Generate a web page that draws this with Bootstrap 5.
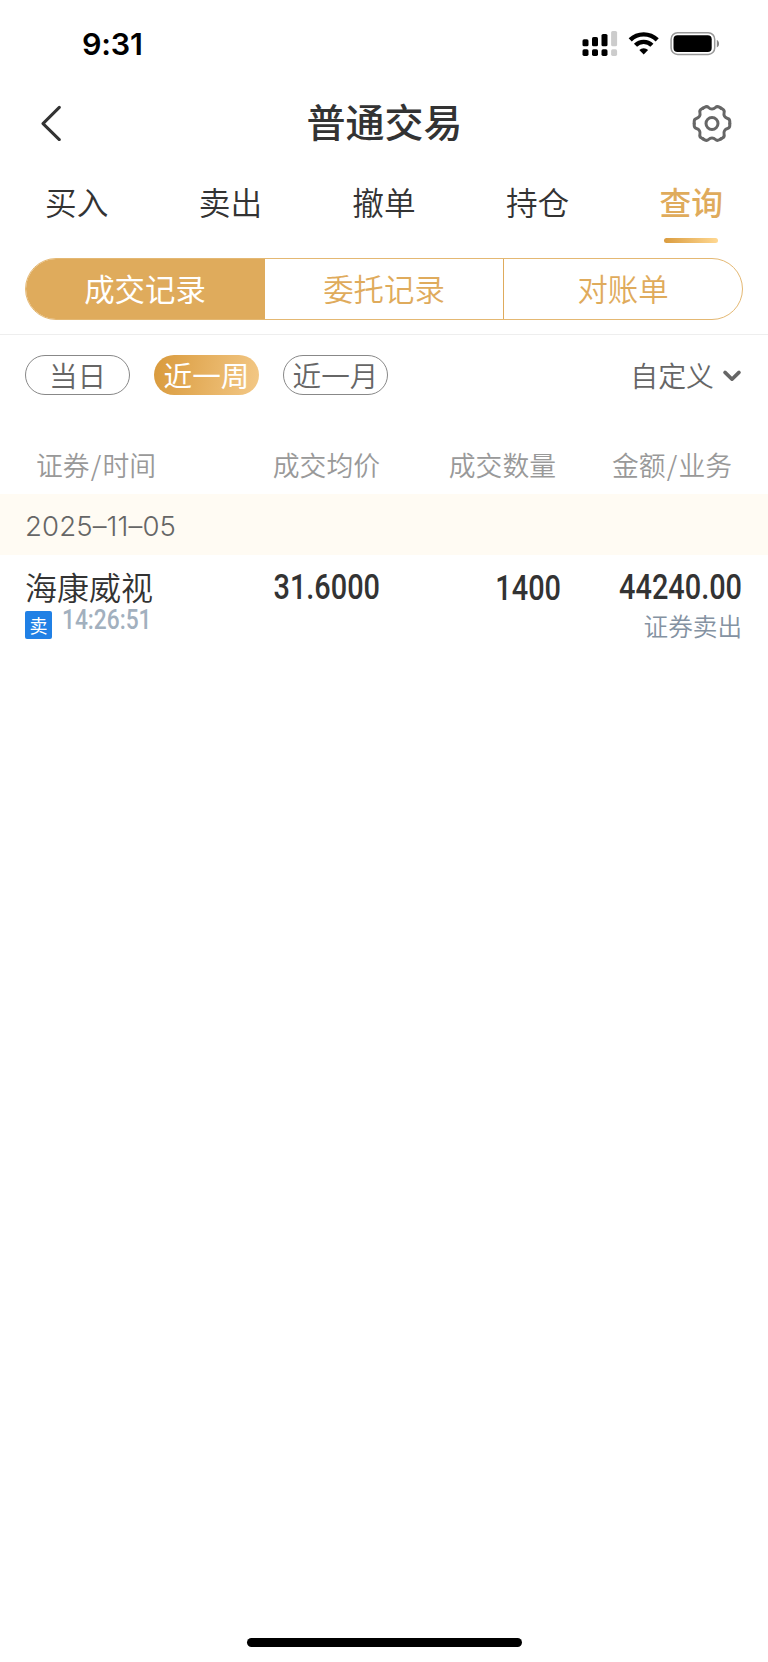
<!DOCTYPE html>
<html lang="zh-CN">
<head>
<meta charset="utf-8">
<meta name="viewport" content="width=device-width, initial-scale=1">
<title>普通交易</title>
<link rel="stylesheet" href="https://cdn.jsdelivr.net/npm/bootstrap@5.3.0/dist/css/bootstrap.min.css">
<style>
  :root { --gold: #dfab5c; --ink: #333; --soft: #666; }
  body { font-family: "Noto Sans CJK SC", sans-serif; font-weight: 350; color: var(--ink); line-height: 1; background: #fff; }
  .screen { height: 1662px; overflow: hidden; }
  .status-bar { height: 87px; padding: 1px 48px 0 82px; }
  .clock { font: 600 30.5px/1 Inter, sans-serif; color: #000; letter-spacing: -.2px; }
  .title-bar { height: 72px; padding: 0 35px 0 40px; }
  .title-bar h1 { font-size: 39px; font-weight: 500; line-height: 1; padding: 0 0 6px 16px; }
  .tabs { height: 99px; }
  .tabs a { flex: 1 1 0; font-size: 31.7px; color: var(--ink); padding-top: 27px; }
  .tabs a.active { color: var(--gold); font-weight: 500; }
  .tabs a.active::after { content: ""; width: 54px; height: 5px; margin-top: 20px; border-radius: 2.5px; background: linear-gradient(90deg, #da9c3f, #ffd892); }
  .segments { height: 62px; margin: 0 25px; border: 1px solid #e4b873; border-radius: 31px; overflow: hidden; }
  .segments a { flex: 1 1 0; font-size: 30.4px; color: var(--gold); padding-bottom: 2px; }
  .segments a + a { border-left: 1px solid var(--gold); }
  .segments a.active { background: var(--gold); color: #fff; font-weight: 400; }
  .rule { height: 1px; margin-top: 14px; background: #eee; }
  .filters { height: 79px; padding: 0 26px 0 25px; }
  .pill { width: 105px; height: 40px; font-size: 28.6px; color: var(--soft); border: 1px solid #888; border-radius: 20px; white-space: nowrap; padding-top: 1px; }
  .pill.active { color: #fff; border: 0; font-weight: 400; background: linear-gradient(100deg, #d99a3c, #f3c886); }
  .custom { font-size: 27.9px; color: var(--soft); padding-top: 3px; }
  .head-row { height: 80px; font-size: 26.8px; color: #999; padding-top: 38px; }
  .slash { margin: 0 1.2px; }
  .cols { display: grid; grid-template-columns: 218px 137px 181px 1fr; padding-left: 25px; padding-right: 26px; }
  .date-band { height: 61px; background: #fffbf3; color: var(--soft); padding: 4px 0 0 25px; font: 350 27.6px/1 Inter, sans-serif; letter-spacing: .1px; }
  .trade { padding-top: 15px; }
  .stock { font-size: 32px; }
  .num { font-family: Roboto, sans-serif; font-weight: 500; font-size: 34.8px; line-height: 1; transform: scaleX(.83); transform-origin: right; }
  .stamp { font-family: Roboto, sans-serif; font-size: 27.4px; font-weight: 500; line-height: 1; height: 27px; margin: -4px 0 0 10px; color: #a2b0be; transform: scaleX(.83); transform-origin: left; }
  .side { width: 27px; height: 28px; border-radius: 2px; background: #2080e5; color: #fff; font-size: 18px; font-weight: 400; }
  .badge-line { margin-top: 9px; }
  .kind { font-size: 24.6px; color: #8492a2; margin-top: 8px; }
  .home-bar { width: 275px; height: 9px; border-radius: 5px; background: #000; margin-bottom: 15px; }
  svg { display: block; }
</style>
</head>
<body>
<main class="screen d-flex flex-column">
  <div class="status-bar d-flex align-items-center justify-content-between">
    <span class="clock">9:31</span>
    <svg width="138" height="28" viewBox="581.5 30 138 28">
      <rect x="582" y="39.3" width="6" height="7" rx="1.6"/><rect x="591.5" y="37" width="6" height="9.3" rx="1.6"/><rect x="601" y="34" width="6" height="12.3" rx="1.6"/>
      <rect x="582" y="49.3" width="6" height="6.6" rx="1.6"/><rect x="591.5" y="49.3" width="6" height="6.6" rx="1.6"/><rect x="601" y="49.3" width="6" height="6.6" rx="1.6"/>
      <g fill="#ccc"><rect x="610.6" y="31" width="6" height="15.3" rx="1.6"/><rect x="610.6" y="49.3" width="6" height="6.6" rx="1.6"/></g>
      <g fill="none" stroke="#000" stroke-width="4.4"><path d="M629.7 39.9a19.2 19.2 0 0 1 27 0"/><path d="M635 45.3a11.6 11.6 0 0 1 16.4 0"/></g>
      <path d="M643.2 54.6l-4.4-4.5a6.3 6.3 0 0 1 8.8 0z"/>
      <rect x="670.6" y="32.7" width="43.6" height="21.7" rx="6.5" fill="none" stroke="#999" stroke-width="1.5"/>
      <rect x="673" y="35.2" width="38.2" height="16.7" rx="4"/>
      <path d="M716.3 40v7.4c3-1 3-6.4 0-7.4z" fill="#888"/>
    </svg>
  </div>

  <header class="title-bar d-flex align-items-center justify-content-between">
    <svg width="22" height="36" viewBox="0 0 22 36" fill="none" stroke="#333" stroke-width="3" stroke-linecap="round" stroke-linejoin="round"><path d="M19.3 2.4L3 18.6l16.3 16"/></svg>
    <h1 class="m-0">普通交易</h1>
    <svg width="42" height="40" viewBox="-21 -20.5 42 40" fill="none" stroke="#666" stroke-width="3" stroke-linejoin="round" stroke-linecap="round">
      <defs><path id="tooth" d="M17.8 0V1.8Q17.8 4.4 15.6 5C12.8 5.8 11.4 8.2 12.1 11Q12.7 13.2 10.5 14.5L8.9 15.4"/></defs>
      <use href="#tooth"/><use href="#tooth" transform="rotate(60)"/><use href="#tooth" transform="rotate(120)"/><use href="#tooth" transform="rotate(180)"/><use href="#tooth" transform="rotate(240)"/><use href="#tooth" transform="rotate(300)"/>
      <circle r="6"/>
    </svg>
  </header>

  <nav class="tabs d-flex">
    <a class="d-flex flex-column align-items-center text-decoration-none">买入</a>
    <a class="d-flex flex-column align-items-center text-decoration-none">卖出</a>
    <a class="d-flex flex-column align-items-center text-decoration-none">撤单</a>
    <a class="d-flex flex-column align-items-center text-decoration-none">持仓</a>
    <a class="active d-flex flex-column align-items-center text-decoration-none">查询</a>
  </nav>

  <div class="segments d-flex">
    <a class="active d-flex align-items-center justify-content-center text-decoration-none">成交记录</a>
    <a class="d-flex align-items-center justify-content-center text-decoration-none">委托记录</a>
    <a class="d-flex align-items-center justify-content-center text-decoration-none">对账单</a>
  </div>
  <div class="rule"></div>

  <div class="filters d-flex align-items-center justify-content-between">
    <div class="d-flex gap-4">
      <span class="pill d-flex align-items-center justify-content-center">当日</span>
      <span class="pill active d-flex align-items-center justify-content-center">近一周</span>
      <span class="pill d-flex align-items-center justify-content-center">近一月</span>
    </div>
    <div class="custom d-flex align-items-center">
      <span>自定义</span>
      <svg class="ms-2" width="20" height="14" viewBox="0 0 20 14" fill="none" stroke="#666" stroke-width="3.6" stroke-linecap="round" stroke-linejoin="round"><path d="M3 3.4l7 6.8 7-6.8"/></svg>
    </div>
  </div>

  <div class="head-row cols">
    <span style="padding-left:11px">证券<span class="slash">/</span>时间</span>
    <span class="text-end">成交均价</span>
    <span class="text-end" style="padding-right:5px">成交数量</span>
    <span class="text-end" style="padding-right:10px">金额<span class="slash">/</span>业务</span>
  </div>

  <div class="date-band d-flex align-items-center">2025–11–05</div>

  <div class="trade cols">
    <div>
      <div class="stock">海康威视</div>
      <div class="badge-line d-flex">
        <span class="side d-flex align-items-center justify-content-center">卖</span>
        <span class="stamp">14:26:51</span>
      </div>
    </div>
    <div class="num text-end">31.6000</div>
    <div class="num text-end" style="padding-top:1px">1400</div>
    <div>
      <div class="num text-end">44240.00</div>
      <div class="kind text-end">证券卖出</div>
    </div>
  </div>

  <div class="home-bar mt-auto mx-auto"></div>
</main>
<script src="https://cdn.jsdelivr.net/npm/bootstrap@5.3.0/dist/js/bootstrap.bundle.min.js"></script>
</body>
</html>
